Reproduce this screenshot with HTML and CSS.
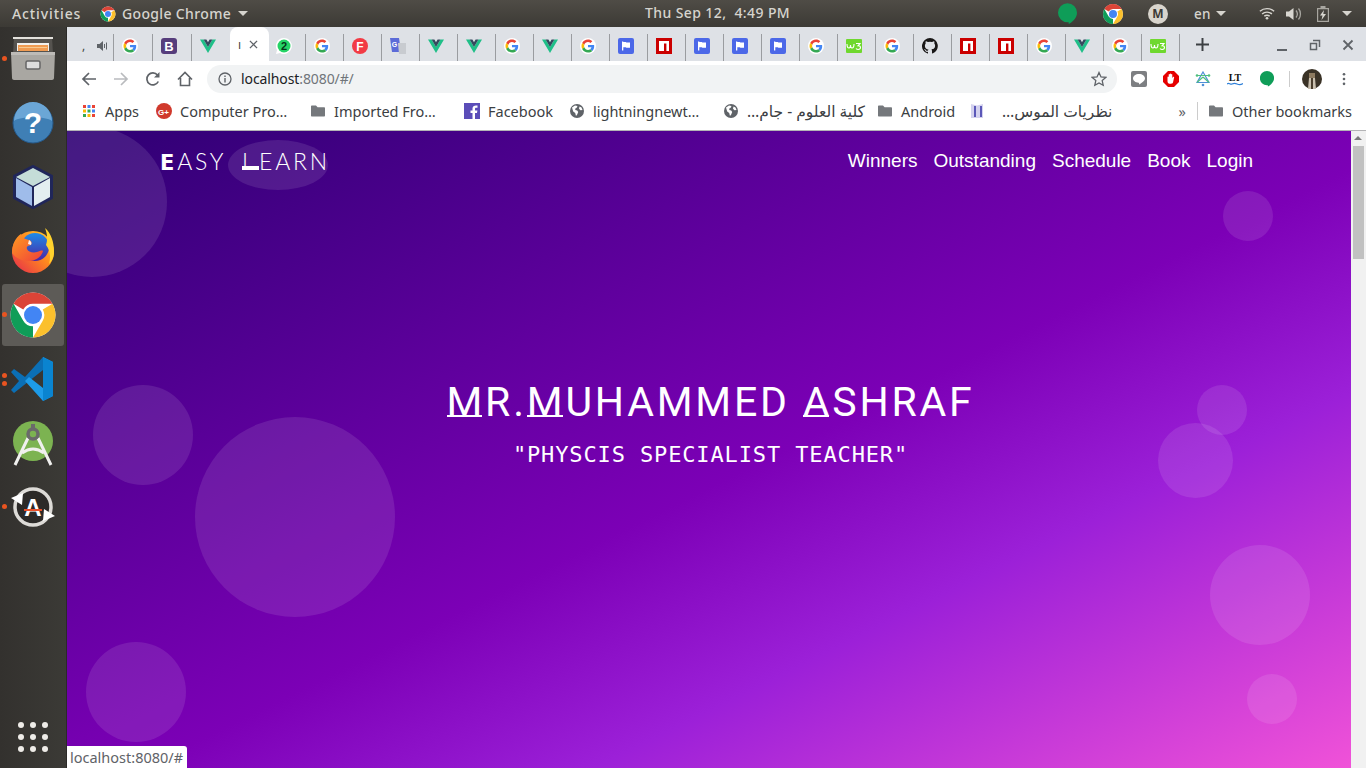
FILE: index.html
```html
<!DOCTYPE html>
<html lang="en">

<head>
  <meta charset="UTF-8" />
  <title>Easy Learn</title>
  <link rel="stylesheet" href="styles.css">
</head>

<body>
  <!-- shared icons -->
  <svg class="defs" width="0" height="0">
    <defs>
      <linearGradient id="foxBody" x1="1" y1="0" x2="0" y2="1">
        <stop offset="0" stop-color="#ffd32e" />
        <stop offset=".45" stop-color="#ff8a1e" />
        <stop offset="1" stop-color="#e4264f" />
      </linearGradient>
      <linearGradient id="foxGlobe" x1="0" y1="0" x2="0" y2="1">
        <stop offset="0" stop-color="#1d8be8" />
        <stop offset="1" stop-color="#4b24a4" />
      </linearGradient>
      <linearGradient id="foxTail" x1="0" y1="0" x2="1" y2="1">
        <stop offset="0" stop-color="#ff9c20" />
        <stop offset="1" stop-color="#f0403a" />
      </linearGradient>
    </defs>
    <symbol id="chrome" viewBox="0 0 48 48">
      <circle cx="24" cy="24" r="20" fill="#fff" />
      <path fill="#db4437" d="M6.7 14A20 20 0 0 1 41.3 14H24a10 10 0 0 0-8.66 5z" />
      <path fill="#fbc02d" d="M41.3 14A20 20 0 0 1 24 44L32.66 29a10 10 0 0 0 0-10z" />
      <path fill="#0f9d58" d="M24 44A20 20 0 0 1 6.7 14L15.34 29a10 10 0 0 0 8.66 5z" />
      <circle cx="24" cy="24" r="8" fill="#4285f4" />
    </symbol>
    <symbol id="g" viewBox="0 0 16 16">
      <circle cx="8" cy="8" r="8" fill="#fff" />
      <g transform="translate(1.500 1.500) scale(.27)">
        <path fill="#EA4335" d="M24 9.5c3.54 0 6.71 1.22 9.21 3.6l6.85-6.85C35.9 2.38 30.47 0 24 0 14.62 0 6.51 5.38 2.56 13.22l7.98 6.19C12.43 13.72 17.74 9.5 24 9.5z" />
        <path fill="#4285F4" d="M46.98 24.55c0-1.57-.15-3.09-.38-4.55H24v9.02h12.94c-.58 2.96-2.26 5.48-4.78 7.18l7.73 6c4.51-4.18 7.09-10.36 7.09-17.65z" />
        <path fill="#FBBC05" d="M10.53 28.59c-.48-1.45-.76-2.99-.76-4.59s.27-3.14.76-4.59l-7.98-6.19C.92 16.46 0 20.12 0 24c0 3.88.92 7.54 2.56 10.78l7.97-6.19z" />
        <path fill="#34A853" d="M24 48c6.48 0 11.93-2.13 15.89-5.81l-7.73-6c-2.15 1.45-4.92 2.3-8.16 2.3-6.26 0-11.57-4.22-13.47-9.91l-7.98 6.19C6.51 42.62 14.62 48 24 48z" />
      </g>
    </symbol>
    <symbol id="vue" viewBox="0 0 16 16">
      <path fill="#1fbf88" d="M0 1.5h3.6L8 9l4.4-7.5H16L8 15z" />
      <path fill="#35495e" d="M3.6 1.5h2.8L8 4.3l1.6-2.8h2.8L8 9z" />
    </symbol>
    <symbol id="flag" viewBox="0 0 16 16">
      <rect width="16" height="16" rx="2" fill="#4c68e8" />
      <path fill="#fff" d="M4 3.5h1.3V4h2c.7 0 .9.6 1.5.6H12v5.2H8.8c-.6 0-.8-.6-1.5-.6h-2v3.3H4z" />
    </symbol>
    <symbol id="npm" viewBox="0 0 16 16">
      <rect width="16" height="16" fill="#cb0000" />
      <path fill="#fff" d="M3 3h10v10h-2.6V5.6H8V13H3z" />
    </symbol>
    <symbol id="w3" viewBox="0 0 16 16">
      <rect width="16" height="14" y="1" rx="1" fill="#6fd82e" />
      <path fill="none" stroke="#fff" stroke-width="1.100" d="M1 6c0 3 1 4 2 4s1.500-1 1.500-3c0 2 .5 3 1.500 3s2-1.500 2-4M10 5.500h4l-2 2.300c2 0 2.500 1 2.500 1.800 0 1.200-1 1.900-2.300 1.900-1 0-1.700-.4-2.200-1" />
    </symbol>
    <symbol id="folder" viewBox="0 0 16 16">
      <path fill="#75787c" d="M1 3.5c0-.6.4-1 1-1h4l1.6 1.8H14c.6 0 1 .4 1 1v7.2c0 .6-.4 1-1 1H2c-.6 0-1-.4-1-1z" />
    </symbol>
    <symbol id="globe" viewBox="0 0 16 16">
      <circle cx="8" cy="8" r="7" fill="#5f6368" />
      <path fill="#fff" d="M3 4.500l3-2 2.500.5-1 2-1 .3-.3 1.700 2 .5 1 1.500-1 2.500-1.200 1.500-.8-3-2-1.500zM10.500 3.500l2 1 1 2.500-2 .2-1.500-1.500z" />
    </symbol>
    <symbol id="hangout" viewBox="0 0 16 18">
      <path fill="#0f9d58" d="M8 0a8 8 0 0 1 8 8c0 4.500-4 8-7 9.500V16a8 8 0 0 1-1 0A8 8 0 0 1 8 0z" />
    </symbol>
  </svg>

  <!-- gnome top panel -->
  <header class="panel">
    <div class="panel-left">
      <span class="panel-activities">Activities</span>
      <svg class="panel-chrome"><use href="#chrome" /></svg>
      <span>Google Chrome</span>
      <span class="caret"></span>
    </div>
    <div class="panel-clock">Thu Sep 12,&nbsp; 4:49 PM</div>
    <div class="panel-right">
      <svg class="tray-hangout"><use href="#hangout" /></svg>
      <svg class="tray-chrome"><use href="#chrome" /></svg>
      <span class="tray-mail">M</span>
      <span class="tray-lang">en</span>
      <span class="caret"></span>
      <svg class="tray-wifi" viewBox="0 0 18 14">
        <path fill="none" stroke="#d8d6d0" stroke-width="1.600" d="M1 4.500c4.500-4 11.500-4 16 0M3.500 7.500c3-2.700 8-2.700 11 0M6 10c1.700-1.300 4.300-1.300 6 0" />
        <circle cx="9" cy="12.300" r="1.500" fill="#d8d6d0" />
      </svg>
      <svg class="tray-sound" viewBox="0 0 16 14">
        <path fill="#d8d6d0" d="M0 4.500h3L7.500 1v12L3 9.500H0z" />
        <path fill="none" stroke="#a8a6a0" stroke-width="1.300" d="M10 3.500c1.600 2 1.600 5 0 7M12.500 1.500c2.600 3 2.600 8 0 11" />
      </svg>
      <svg class="tray-battery" viewBox="0 0 12 16">
        <path fill="none" stroke="#a8a6a0" stroke-width="1.200" d="M.6 2.600h10.800v12.800H.6z" />
        <path fill="#a8a6a0" d="M3.500 0h5v2h-5z" />
        <path fill="#d8d6d0" d="M7 4L3 9.500h2.500L4.500 14 9 8H6.300z" />
      </svg>
      <span class="caret"></span>
    </div>
  </header>

  <div class="desktop">
    <!-- launcher -->
    <nav class="dock">
      <div class="dock-item">
        <span class="run-dot"></span>
        <svg class="dock-icon" viewBox="0 0 48 48">
          <path fill="#55534f" d="M5 2h38l1 17H4z" />
          <path fill="#e3e1dc" d="M4 2h40v2H4z" />
          <path fill="#f0f0ee" d="M8 8h32v8H8z" />
          <path fill="#ef9b52" d="M9 10h30v6H9z" />
          <path fill="#f7c98f" d="M10 12h28v1H10z" />
          <path fill="#a9a7a2" d="M2 17h44l-1 26c0 1-1 2-2 2H5c-1 0-2-1-2-2z" />
          <path fill="#bdbbb7" d="M2 17h44v3H2z" />
          <rect x="17" y="26" width="14" height="8" rx="1.500" fill="#ddd" stroke="#666" stroke-width="1.500" />
        </svg>
      </div>
      <div class="dock-item">
        <svg class="dock-icon" viewBox="0 0 48 48">
          <circle cx="24" cy="24" r="20" fill="#3f7fb5" stroke="#25598a" stroke-width="1" />
          <path fill="#6ba6d6" d="M5 22a19 19 0 0 1 38 0c-6-5-32-5-38 0z" />
          <text x="24" y="34" text-anchor="middle" class="help-mark">?</text>
        </svg>
      </div>
      <div class="dock-item">
        <svg class="dock-icon" viewBox="0 0 48 48">
          <path fill="#20265a" stroke="#20265a" stroke-width="2" stroke-linejoin="round" d="M24 3l19 10v22L24 45 5 35V13z" />
          <path fill="#c5ddd8" d="M24 5l17 9-17 9-17-9z" />
          <path fill="#9fbcea" d="M7 15l16 9v19L7 34z" />
          <path fill="#e3eef0" d="M25 24l16-9v19l-16 9z" />
        </svg>
      </div>
      <div class="dock-item">
        <svg class="dock-icon" viewBox="0 0 48 48">
          <circle cx="24" cy="25" r="21" fill="url(#foxBody)" />
          <circle cx="26" cy="20" r="14" fill="url(#foxGlobe)" />
          <path fill="url(#foxTail)" d="M3 26C3 17 7 10 12 7c1 3 3 5 8 6 3 1 3 3 2 5-3 1-5 1-4 4 1 3 6 4 10 3 3-1 5-2 6-1-1 5-7 10-14 10-9 0-14-4-17-8z" />
          <path fill="#fff" opacity=".9" d="M20 13c2 1 3 3 2 5l-3-1z" />
          <path fill="#ffd32e" d="M36 1c6 5 9 14 9 24 0 5-2 9-5 12 2-7 1-14-3-19 2-6 1-12-1-17z" />
        </svg>
      </div>
      <div class="dock-item dock-active">
        <span class="run-dot"></span>
        <svg class="dock-icon chrome-big"><use href="#chrome" /></svg>
      </div>
      <div class="dock-item">
        <span class="run-dot run-top"></span>
        <span class="run-dot run-bottom"></span>
        <svg class="dock-icon" viewBox="0 0 48 48">
          <path fill="#0b6fb5" d="M2 17l3-3 11 8 18-20v13L5 38l-3-3 8-9z" />
          <path fill="#1d9be8" d="M34 2l10 5v34l-10 5-18-20 4-4 14 11z" />
          <path fill="#0a84d0" d="M34 2l10 5v34l-10 5z" />
        </svg>
      </div>
      <div class="dock-item">
        <svg class="dock-icon" viewBox="0 0 48 48">
          <circle cx="24" cy="22" r="20" fill="#7cb351" />
          <path fill="none" stroke="#f0f0ee" stroke-width="3" d="M6 46l13-27M42 46L29 19M13 34c7-5 15-5 22 0" />
          <circle cx="24" cy="15" r="5" fill="none" stroke="#6a6a6a" stroke-width="3.500" />
          <path fill="#6a6a6a" d="M22 5h4v5h-4z" />
        </svg>
      </div>
      <div class="dock-item">
        <span class="run-dot"></span>
        <svg class="dock-icon" viewBox="0 0 48 48">
          <circle cx="24" cy="24" r="17" fill="#2c2a28" />
          <circle cx="24" cy="24" r="18" fill="none" stroke="#dddbd7" stroke-width="3.500" />
          <path fill="#fff" d="M2 15l12-5-1 12zM46 33l-12 5 1-12z" />
          <text x="24" y="33" text-anchor="middle" class="update-mark">A</text>
          <path fill="#e8502a" d="M15 26h18v2H15z" />
        </svg>
      </div>
      <div class="dock-grid">
        <i></i><i></i><i></i><i></i><i></i><i></i><i></i><i></i><i></i>
      </div>
    </nav>

    <main class="browser">
      <!-- tab strip -->
      <div class="tabstrip">
        <div class="tab tab-first">
          <span class="tab-sliver">,</span>
          <svg class="tab-sound" viewBox="0 0 12 10">
            <path fill="#5f6368" d="M0 3h2.500L6 0v10L2.500 7H0z" />
            <path fill="none" stroke="#5f6368" d="M7.500 3v4M9.500 1.500v7" />
          </svg>
        </div>
        <div class="tab tab-wide"><svg class="fav"><use href="#g" /></svg></div>
        <div class="tab tab-wide">
          <svg class="fav" viewBox="0 0 16 16">
            <rect width="16" height="16" rx="3" fill="#563d7c" />
            <text x="8" y="13" text-anchor="middle" class="fav-b">B</text>
          </svg>
        </div>
        <div class="tab tab-before-active"><svg class="fav"><use href="#vue" /></svg></div>
        <div class="tab-active">
          <span class="tab-sliver">ı</span>
          <svg class="tab-close" viewBox="0 0 10 10">
            <path stroke="#5f6368" stroke-width="1.400" d="M1 1l8 8M9 1l-8 8" />
          </svg>
        </div>
        <div class="tab tab-after-active">
          <svg class="fav" viewBox="0 0 16 16">
            <path fill="#fff" d="M8 0a8 8 0 1 1-4 15L0 16l1-4A8 8 0 0 1 8 0z" />
            <circle cx="8" cy="8" r="6.500" fill="#25d366" />
            <text x="8" y="12" text-anchor="middle" class="fav-two">2</text>
          </svg>
        </div>
        <div class="tab"><svg class="fav"><use href="#g" /></svg></div>
        <div class="tab">
          <svg class="fav" viewBox="0 0 16 16">
            <circle cx="8" cy="8" r="8" fill="#f23b45" />
            <text x="8" y="12.500" text-anchor="middle" class="fav-f">F</text>
          </svg>
        </div>
        <div class="tab">
          <svg class="fav" viewBox="0 0 16 16">
            <path fill="#5c6bd8" d="M0 0h9l2 14H2z" />
            <path fill="#c8cbd0" d="M8 5h8v11H9z" />
            <text x="4.500" y="9" text-anchor="middle" class="fav-tr">G</text>
          </svg>
        </div>
        <div class="tab"><svg class="fav"><use href="#vue" /></svg></div>
        <div class="tab"><svg class="fav"><use href="#vue" /></svg></div>
        <div class="tab"><svg class="fav"><use href="#g" /></svg></div>
        <div class="tab"><svg class="fav"><use href="#vue" /></svg></div>
        <div class="tab"><svg class="fav"><use href="#g" /></svg></div>
        <div class="tab"><svg class="fav"><use href="#flag" /></svg></div>
        <div class="tab"><svg class="fav"><use href="#npm" /></svg></div>
        <div class="tab"><svg class="fav"><use href="#flag" /></svg></div>
        <div class="tab"><svg class="fav"><use href="#flag" /></svg></div>
        <div class="tab"><svg class="fav"><use href="#flag" /></svg></div>
        <div class="tab"><svg class="fav"><use href="#g" /></svg></div>
        <div class="tab"><svg class="fav"><use href="#w3" /></svg></div>
        <div class="tab"><svg class="fav"><use href="#g" /></svg></div>
        <div class="tab">
          <svg class="fav" viewBox="0 0 16 16">
            <path fill="#191717" d="M8 0a8 8 0 0 0-2.500 15.600c.4.100.5-.2.500-.4v-1.400c-2.200.5-2.700-1-2.700-1-.4-.9-.9-1.200-.9-1.200-.7-.5.100-.5.100-.5.800.1 1.200.8 1.200.8.700 1.200 1.900.9 2.300.7.100-.5.300-.9.500-1.100-1.800-.2-3.600-.9-3.600-4 0-.9.300-1.600.8-2.100-.1-.2-.4-1 .1-2.100 0 0 .7-.2 2.200.8a7.600 7.600 0 0 1 4 0c1.500-1 2.200-.8 2.200-.8.400 1.100.2 1.900.1 2.100.5.600.8 1.300.8 2.100 0 3.100-1.900 3.700-3.700 3.900.3.300.6.800.6 1.500v2.200c0 .2.100.5.600.4A8 8 0 0 0 8 0z" />
          </svg>
        </div>
        <div class="tab"><svg class="fav"><use href="#npm" /></svg></div>
        <div class="tab"><svg class="fav"><use href="#npm" /></svg></div>
        <div class="tab"><svg class="fav"><use href="#g" /></svg></div>
        <div class="tab"><svg class="fav"><use href="#vue" /></svg></div>
        <div class="tab"><svg class="fav"><use href="#g" /></svg></div>
        <div class="tab"><svg class="fav"><use href="#w3" /></svg></div>
        <svg class="new-tab" viewBox="0 0 12 12">
          <path stroke="#3c4043" stroke-width="1.800" d="M6 0v12M0 6h12" />
        </svg>
        <div class="window-controls">
          <svg viewBox="0 0 12 12"><path stroke="#5f6368" stroke-width="2" d="M1 11h10" /></svg>
          <svg viewBox="0 0 12 12">
            <path fill="none" stroke="#5f6368" stroke-width="1.500" d="M4 1.500h6.500V8M1.500 4.500h6v6h-6z" />
          </svg>
          <svg viewBox="0 0 12 12"><path stroke="#5f6368" stroke-width="1.800" d="M1.500 1.500l9 9M10.500 1.500l-9 9" /></svg>
        </div>
      </div>

      <!-- address bar -->
      <div class="toolbar">
        <svg class="tool" viewBox="0 0 16 16"><path fill="none" stroke="#5f6368" stroke-width="1.700" d="M15 8H2M8 2L2 8l6 6" /></svg>
        <svg class="tool" viewBox="0 0 16 16"><path fill="none" stroke="#b9bbbe" stroke-width="1.700" d="M1 8h13M8 2l6 6-6 6" /></svg>
        <svg class="tool" viewBox="0 0 16 16">
          <path fill="none" stroke="#5f6368" stroke-width="1.700" d="M13.300 10.500A6 6 0 1 1 12.500 4" />
          <path fill="#5f6368" d="M14.500 1v5.500H9z" />
        </svg>
        <svg class="tool" viewBox="0 0 16 16"><path fill="none" stroke="#5f6368" stroke-width="1.600" d="M1 8.500L8 1.500l7 7M3.500 7v7.500h9V7" /></svg>
        <div class="omnibox">
          <svg class="omni-info" viewBox="0 0 14 14">
            <circle cx="7" cy="7" r="6" fill="none" stroke="#5f6368" stroke-width="1.300" />
            <path fill="#5f6368" d="M6.300 6h1.400v4.500H6.300zM6.300 3.500h1.400v1.400H6.300z" />
          </svg>
          <span class="omni-host">localhost</span><span class="omni-rest">:8080/#/</span>
          <svg class="omni-star" viewBox="0 0 16 16">
            <path fill="none" stroke="#5f6368" stroke-width="1.300" d="M8 1.500l2 4.400 4.800.5-3.600 3.200 1 4.700L8 11.900l-4.200 2.400 1-4.700L1.200 6.400 6 5.900z" />
          </svg>
        </div>
        <div class="extensions">
          <svg class="ext" viewBox="0 0 16 16">
            <rect width="16" height="16" rx="2" fill="#7d7f82" />
            <path fill="#fff" d="M8 3c3.300 0 6 1.900 6 4.400 0 2.300-3.300 4.600-6 6 .2-1 .2-1.600-.4-1.700C4.500 11.400 2 9.600 2 7.400 2 4.900 4.700 3 8 3z" />
          </svg>
          <svg class="ext" viewBox="0 0 16 16">
            <path fill="#e60000" d="M5 0h6l5 5v6l-5 5H5l-5-5V5z" />
            <path fill="#fff" d="M4.500 6c0-.8 1-.8 1.200 0V3.500c0-.8 1.100-.8 1.200 0V3c0-.8 1.200-.8 1.200 0v.5c0-.8 1.200-.8 1.200 0V7l.8-1c.6-.6 1.300 0 1 .6L10 11.500c-.4.800-1 1.200-2 1.200H6.500c-1.200 0-2-1-2-2.200z" />
          </svg>
          <svg class="ext" viewBox="0 0 16 16">
            <path fill="none" stroke="#4f8fd8" stroke-width="1.200" d="M8 1l6 10.500H2z" />
            <path fill="none" stroke="#4fbf7f" stroke-width="1.200" d="M8 6l-6 5.500M8 6l6 5.500M2 4.500h12" />
            <circle cx="8" cy="14" r="1.300" fill="#4f8fd8" />
            <circle cx="2" cy="4.500" r="1.300" fill="#4fbf7f" />
            <circle cx="14" cy="4.500" r="1.300" fill="#4fbf7f" />
          </svg>
          <svg class="ext" viewBox="0 0 16 16">
            <text x="8" y="10" text-anchor="middle" class="ext-lt">LT</text>
            <path fill="none" stroke="#2f80d8" stroke-width="1.300" d="M0 13c2-2 3 1 5 0s3-1 5 0 4 1 6-.5" />
          </svg>
          <svg class="ext" viewBox="0 0 16 18"><use href="#hangout" /></svg>
          <span class="ext-sep"></span>
          <svg class="avatar" viewBox="0 0 20 20">
            <circle cx="10" cy="10" r="10" fill="#3a3226" />
            <path fill="#8d7a5f" d="M7 4h6v5H7z" />
            <path fill="#c9bfae" d="M7 9h6l1 11H6z" />
            <path fill="#4a3d2c" d="M9 9h2v11H9z" />
          </svg>
          <svg class="menu-dots" viewBox="0 0 4 16">
            <circle cx="2" cy="2.500" r="1.500" fill="#5f6368" />
            <circle cx="2" cy="8" r="1.500" fill="#5f6368" />
            <circle cx="2" cy="13.500" r="1.500" fill="#5f6368" />
          </svg>
        </div>
      </div>

      <!-- bookmarks -->
      <div class="bookmarks">
        <div class="bm">
          <svg class="bm-icon" viewBox="0 0 14 14">
            <path fill="#ea4335" d="M1 1h3v3H1z" /><path fill="#4285f4" d="M5.500 1h3v3h-3z" /><path fill="#ea4335" d="M10 1h3v3h-3z" />
            <path fill="#fbbc05" d="M1 5.500h3v3H1z" /><path fill="#34a853" d="M5.500 5.500h3v3h-3z" /><path fill="#4285f4" d="M10 5.500h3v3h-3z" />
            <path fill="#34a853" d="M1 10h3v3H1z" /><path fill="#fbbc05" d="M5.500 10h3v3h-3z" /><path fill="#ea4335" d="M10 10h3v3h-3z" />
          </svg>
          <span>Apps</span>
        </div>
        <div class="bm">
          <svg class="bm-icon" viewBox="0 0 16 16">
            <circle cx="8" cy="8" r="8" fill="#d0392c" />
            <text x="7.500" y="11.500" text-anchor="middle" class="fav-gplus">G+</text>
          </svg>
          <span>Computer Pro…</span>
        </div>
        <div class="bm"><svg class="bm-icon"><use href="#folder" /></svg><span>Imported Fro…</span></div>
        <div class="bm">
          <svg class="bm-icon" viewBox="0 0 16 16">
            <rect width="16" height="16" fill="#5b4db8" />
            <path fill="#fff" d="M11 16v-6h2l.4-2.500H11V6c0-.8.3-1.200 1.200-1.200h1.300V2.500c-2.700-.4-5 .1-5 3.100v1.900H6.500V10h2v6z" />
          </svg>
          <span>Facebook</span>
        </div>
        <div class="bm"><svg class="bm-icon"><use href="#globe" /></svg><span>lightningnewt…</span></div>
        <div class="bm"><svg class="bm-icon"><use href="#globe" /></svg><span class="bm-ar" dir="rtl">كلية العلوم - جام…</span></div>
        <div class="bm"><svg class="bm-icon"><use href="#folder" /></svg><span>Android</span></div>
        <div class="bm bm-doc">
          <svg class="bm-icon" viewBox="0 0 16 16">
            <path fill="#d4d2ee" d="M2 1l6 1.500 6-1.500v14H2z" />
            <path fill="#5b58b8" d="M5 3h2v11H5zM11 3h2v11h-2z" />
          </svg>
          <span class="bm-ar" dir="rtl">نظريات الموس…</span>
        </div>
        <div class="bm-end">
          <span class="bm-more">»</span>
          <span class="bm-sep"></span>
          <svg class="bm-icon"><use href="#folder" /></svg>
          <span>Other bookmarks</span>
        </div>
      </div>

      <!-- the page itself -->
      <div class="viewport">
        <div class="page">
          <span class="circle c1"></span>
          <span class="circle c2"></span>
          <span class="circle c3"></span>
          <span class="circle c4"></span>
          <span class="circle c5"></span>
          <span class="circle c6"></span>
          <span class="circle c7"></span>
          <span class="circle c8"></span>
          <span class="circle c9"></span>

          <div class="site-header">
            <a class="logo">
              <span class="logo-word"><b>E</b>ASY</span>
              <span class="logo-pill"><span class="logo-l">L</span>EARN</span>
            </a>
            <ul class="site-nav">
              <li>Winners</li>
              <li>Outstanding</li>
              <li>Schedule</li>
              <li>Book</li>
              <li>Login</li>
            </ul>
          </div>

          <div class="hero">
            <h1><span class="box-m">M</span>R.<span class="box-m">M</span>UHAMMED <span class="box-a">A</span>SHRAF</h1>
            <p>"PHYSCIS SPECIALIST TEACHER"</p>
          </div>
        </div>
        <div class="scrollbar">
          <span class="scroll-up"></span>
          <span class="scroll-thumb"></span>
        </div>
        <div class="status-bubble">localhost:8080/#</div>
      </div>
    </main>
  </div>
</body>

</html>
```

FILE: styles.css
```css
* {
  box-sizing: border-box;
}

html,
body {
  margin: 0;
  height: 100%;
  overflow: hidden;
}

body {
  display: flex;
  flex-direction: column;
  font-family: "Noto Sans", "DejaVu Sans", sans-serif;
  background: #33312e;
}

svg {
  display: block;
  flex: none;
}

.defs {
  position: absolute;
}

/* top panel */
.panel {
  height: 27px;
  flex: none;
  display: flex;
  align-items: center;
  position: relative;
  background: linear-gradient(#4f4c46, #3c3a35);
  color: #d6d4ce;
  font-size: 14px;
  font-weight: 500;
  letter-spacing: 0.35px;
}

.panel-left {
  display: flex;
  align-items: center;
  padding-left: 12px;
}

.panel-activities {
  width: 87px;
  letter-spacing: 0.9px;
}

.panel-chrome {
  width: 18px;
  height: 18px;
  margin-right: 5px;
}

.caret {
  width: 0;
  height: 0;
  border-left: 5px solid transparent;
  border-right: 5px solid transparent;
  border-top: 5px solid #d6d4ce;
  margin-left: 7px;
}

.panel-clock {
  position: absolute;
  left: 645px;
  top: 3px;
  white-space: nowrap;
  letter-spacing: 0.4px;
}

.panel-right {
  margin-left: auto;
  display: flex;
  align-items: center;
  padding-right: 14px;
}

.tray-hangout {
  width: 19px;
  height: 24px;
  margin-right: 24px;
}

.tray-chrome {
  width: 24px;
  height: 24px;
  margin-right: 23px;
}

.tray-mail {
  width: 20px;
  height: 20px;
  margin-right: 26px;
  border-radius: 50%;
  background: #d8d4cc;
  color: #3c3a35;
  font-size: 12px;
  font-weight: 700;
  text-align: center;
  line-height: 20px;
  letter-spacing: 0;
}

.tray-lang {
  width: 15px;
  font-size: 13.500px;
}

.tray-wifi {
  width: 16px;
  height: 13px;
  margin-left: 33px;
}

.tray-sound {
  width: 16px;
  height: 14px;
  margin-left: 11px;
}

.tray-battery {
  width: 12px;
  height: 16px;
  margin-left: 15px;
}

.panel-right .caret:last-child {
  margin-left: 13px;
}

/* dock */
.desktop {
  flex: 1;
  min-height: 0;
  display: flex;
}

.dock {
  width: 67px;
  flex: none;
  display: flex;
  flex-direction: column;
  background: linear-gradient(90deg, #33312e, #3b3a36);
  border-right: 1px solid #2b2a28;
}

.dock-item {
  height: 64px;
  flex: none;
  display: flex;
  align-items: center;
  justify-content: center;
  position: relative;
}

.dock-active {
  margin: 0 2px;
}

.dock-active::before {
  content: "";
  position: absolute;
  inset: 1px 0;
  border-radius: 3px;
  background: #5d5b57;
}

.dock-icon {
  width: 48px;
  height: 48px;
  position: relative;
}

.chrome-big {
  width: 54px;
  height: 54px;
}

.run-dot {
  position: absolute;
  left: 2px;
  top: 29px;
  width: 5px;
  height: 5px;
  border-radius: 50%;
  background: #e95420;
}

.dock-active .run-dot {
  left: 0;
}

.run-top {
  top: 26px;
}

.run-bottom {
  top: 34px;
}

.help-mark {
  font: bold 30px "Liberation Sans", sans-serif;
  fill: #fff;
}

.update-mark {
  font: bold 24px "Liberation Sans", sans-serif;
  fill: #fff;
}

.dock-grid {
  margin-top: auto;
  margin-bottom: 16px;
  align-self: center;
  display: grid;
  grid-template-columns: repeat(3, 6px);
  gap: 6px;
}

.dock-grid i {
  width: 6px;
  height: 6px;
  border-radius: 50%;
  background: #eeece8;
}

/* browser */
.browser {
  flex: 1;
  min-width: 0;
  display: flex;
  flex-direction: column;
  background: #fff;
}

.tabstrip {
  height: 34px;
  flex: none;
  display: flex;
  background: #dee1e6;
  padding-left: 9px;
}

.tab {
  width: 38px;
  height: 27px;
  margin-top: 7px;
  flex: none;
  display: flex;
  align-items: center;
  padding: 0 0 4px 8px;
  border-right: 1px solid #9a9ca0;
}

.tab-wide {
  width: 39px;
}

.tab-first {
  padding-left: 6px;
  gap: 12px;
}

.tab-before-active {
  border-right: 0;
}

.tab-after-active {
  width: 37px;
  padding-left: 7px;
}

.fav {
  width: 16px;
  height: 16px;
}

.tab-sliver {
  font-size: 12px;
  color: #444;
}

.tab-sound {
  width: 12px;
  height: 10px;
}

.tab-active {
  width: 39px;
  flex: none;
  display: flex;
  align-items: center;
  justify-content: flex-end;
  gap: 8px;
  padding: 0 11px 0 0;
  background: #fff;
  border-radius: 8px 8px 0 0;
}

.tab-close {
  width: 9px;
  height: 9px;
}

.fav-b {
  font: bold 13px "Liberation Sans", sans-serif;
  fill: #fff;
}

.fav-two {
  font: bold 11px "Liberation Sans", sans-serif;
  fill: #06351a;
}

.fav-f {
  font: bold 12px "Liberation Sans", sans-serif;
  fill: #fff;
}

.fav-tr {
  font: bold 7px "Liberation Sans", sans-serif;
  fill: #fff;
}

.fav-gplus {
  font: bold 8px "Liberation Sans", sans-serif;
  fill: #fff;
}

.new-tab {
  width: 13px;
  height: 13px;
  margin: 11px 0 0 16px;
}

.window-controls {
  margin-left: auto;
  display: flex;
  align-items: flex-start;
  gap: 21px;
  padding: 12px 12px 0 0;
}

.window-controls svg {
  width: 12px;
  height: 12px;
}

.toolbar {
  height: 35px;
  flex: none;
  display: flex;
  align-items: center;
  padding-left: 14px;
}

.tool {
  width: 16px;
  height: 16px;
  margin-right: 16px;
}

.omnibox {
  width: 910px;
  height: 28px;
  margin-left: -2px;
  padding: 0 10px 0 11px;
  display: flex;
  align-items: center;
  border-radius: 14px;
  background: #f1f3f4;
  font-size: 14px;
  letter-spacing: -0.1px;
}

.omni-info {
  width: 14px;
  height: 14px;
  margin-right: 9px;
}

.omni-host {
  color: #202124;
}

.omni-rest {
  color: #70757a;
}

.omni-star {
  width: 16px;
  height: 16px;
  margin-left: auto;
}

.extensions {
  display: flex;
  align-items: center;
  padding-left: 14px;
}

.ext {
  width: 16px;
  height: 16px;
  margin-right: 16px;
}

.ext-lt {
  font: bold 10px "Liberation Serif", serif;
  fill: #111;
}

.ext-sep {
  width: 1px;
  height: 16px;
  margin: 0 12px 0 -2px;
  background: #ccc;
}

.avatar {
  width: 20px;
  height: 20px;
  margin-right: 20px;
}

.menu-dots {
  width: 4px;
  height: 14px;
}

.bookmarks {
  height: 34px;
  flex: none;
  display: grid;
  grid-template-columns: 74px 154px 154px 105px 154px 154px 92px 205px 1fr;
  align-items: center;
  padding: 0 14px 4px 15px;
  color: #3c4043;
  font-size: 14.500px;
  white-space: nowrap;
}

.bm {
  display: flex;
  align-items: center;
  gap: 8px;
}

.bm-icon {
  width: 16px;
  height: 16px;
}

.bm:first-child .bm-icon {
  width: 14px;
  height: 14px;
}

.bm:first-child {
  gap: 9px;
}

.bm-ar {
  font-size: 15.500px;
}

.bm-doc {
  gap: 17px;
}

.bm-end {
  display: flex;
  align-items: center;
  justify-content: flex-end;
  gap: 8px;
}

.bm-more {
  color: #5f6368;
  margin-right: 3px;
}

.bm-sep {
  width: 1px;
  height: 18px;
  margin-right: 2px;
  background: #ccc;
}

/* page */
.viewport {
  flex: 1;
  min-height: 0;
  display: flex;
  position: relative;
  border-top: 1px solid #b4b4b6;
}

.page {
  flex: 1;
  min-width: 0;
  position: relative;
  overflow: hidden;
  color: #fff;
  background: linear-gradient(to bottom right, #2e0073 0%, #7c00b6 53%, #9c20d8 70.500%, #f052d8 100%);
}

.circle {
  position: absolute;
  border-radius: 50%;
  background: rgba(255, 255, 255, 0.1);
}

.c1 { left: -50px; top: -4px; width: 150px; height: 150px; }
.c2 { left: 1156px; top: 60px; width: 50px; height: 50px; }
.c3 { left: 26px; top: 254px; width: 100px; height: 100px; }
.c4 { left: 128px; top: 286px; width: 200px; height: 200px; }
.c5 { left: 1130px; top: 254px; width: 50px; height: 50px; }
.c6 { left: 1091px; top: 292px; width: 75px; height: 75px; }
.c7 { left: 1143px; top: 414px; width: 100px; height: 100px; }
.c8 { left: 19px; top: 511px; width: 100px; height: 100px; }
.c9 { left: 1180px; top: 543px; width: 50px; height: 50px; }

.site-header {
  position: relative;
  display: flex;
  align-items: flex-start;
  justify-content: space-between;
  padding: 9px 98px 0 93px;
}

.logo {
  display: flex;
  height: 50px;
  font-family: "Lato", sans-serif;
  font-size: 23px;
  font-weight: 300;
  line-height: 43px;
  letter-spacing: 2.800px;
  white-space: nowrap;
}

.logo b {
  font-family: "DejaVu Sans", sans-serif;
  font-size: 21px;
  font-weight: 700;
}

.logo-word {
  width: 68px;
}

.logo-pill {
  width: 100px;
  height: 50px;
  padding-left: 14px;
  border-radius: 50%;
  background: rgba(255, 255, 255, 0.1);
}

.logo-l {
  display: inline-block;
  width: 17px;
  height: 30px;
  border-bottom: 4px solid #fff;
  line-height: 43px;
}

.site-nav {
  display: flex;
  gap: 16px;
  margin: 9px 0 0;
  padding: 0;
  list-style: none;
  font-family: "Liberation Sans", sans-serif;
  font-size: 19px;
  line-height: 24px;
}

.hero {
  position: relative;
  margin-top: 187px;
  padding-left: 3px;
  text-align: center;
}

.hero h1 {
  margin: 0;
  font-family: "Roboto", sans-serif;
  font-size: 41px;
  font-weight: 400;
  line-height: 50px;
  letter-spacing: 2.800px;
  white-space: pre-wrap;
}

.box-m,
.box-a {
  display: inline-block;
  height: 30px;
  margin-right: 2.800px;
  border-bottom: 2px solid #fff;
  line-height: 31px;
  letter-spacing: 0;
}

.hero p {
  margin: 15px 0 0;
  font-family: "DejaVu Sans Mono", monospace;
  font-size: 22px;
  line-height: 26px;
  letter-spacing: 0.870px;
}

.scrollbar {
  width: 15px;
  flex: none;
  display: flex;
  flex-direction: column;
  align-items: center;
  background: #f1f1f1;
}

.scroll-up {
  height: 15px;
  width: 100%;
  flex: none;
  position: relative;
}

.scroll-up::after {
  content: "";
  position: absolute;
  left: 3px;
  top: 5px;
  border-left: 4px solid transparent;
  border-right: 4px solid transparent;
  border-bottom: 4px solid #7a7a7a;
}

.scroll-thumb {
  width: 11px;
  height: 113px;
  background: #c1c1c1;
}

.status-bubble {
  position: absolute;
  left: 0;
  bottom: 0;
  height: 22px;
  width: 120px;
  padding: 0 3px;
  background: #fff;
  border-radius: 0 3px 0 0;
  color: #5f6368;
  font-size: 14.500px;
  line-height: 22px;
  white-space: nowrap;
}
```
